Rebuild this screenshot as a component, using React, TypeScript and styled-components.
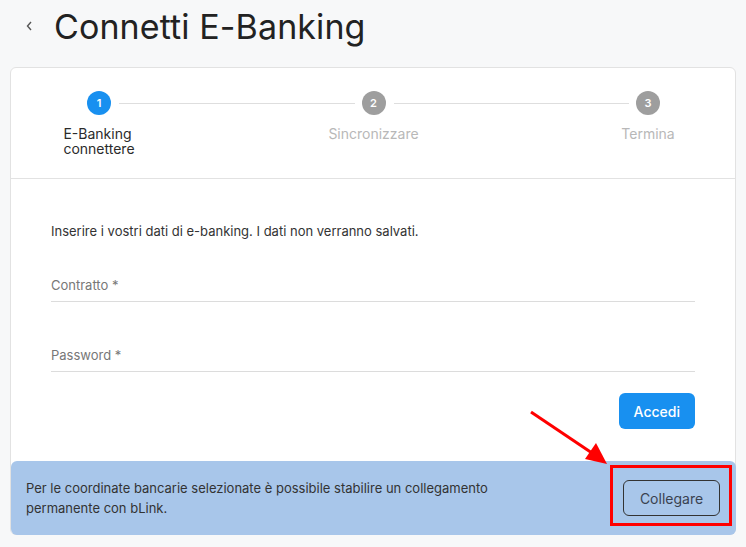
import React from "react";
import styled, { createGlobalStyle } from "styled-components";

const GlobalStyle = createGlobalStyle`
  html, body {
    margin: 0;
    padding: 0;
    background: #f7f8f9;
    font-family: Inter, "Noto Sans", sans-serif;
    color: #222;
  }
`;

const Page = styled.div`
  position: relative;
  width: 746px;
  height: 547px;
  overflow: hidden;
`;

const Header = styled.header`
  display: flex;
  align-items: center;
  height: 52px;
  padding-left: 22px;
  gap: 18px;

  h1 {
    margin: 0;
    font-size: 34px;
    font-weight: 400;
    color: #222;
    letter-spacing: 0.1px;
  }
`;

const Back = styled.button`
  display: flex;
  align-items: center;
  justify-content: center;
  width: 14px;
  height: 20px;
  padding: 0;
  border: none;
  background: none;
  color: #555;
`;

const Card = styled.section`
  margin: 15px 10px 0;
  background: #fff;
  border: 1px solid #e2e2e2;
  border-radius: 6px;
`;

const Steps = styled.div`
  display: flex;
  align-items: flex-start;
  height: 111px;
  padding: 23px 75px 0 76px;
  box-sizing: border-box;
  border-bottom: 1px solid #e2e2e2;
`;

const Step = styled.div`
  display: flex;
  flex-direction: column;
  align-items: center;
  width: 24px;
`;

const Dot = styled.div<{ $active?: boolean }>`
  display: flex;
  align-items: center;
  justify-content: center;
  width: 24px;
  height: 24px;
  border-radius: 50%;
  background: ${({ $active }) => ($active ? "#1890f0" : "#9e9e9e")};
  color: #fff;
  font-size: 11px;
  font-weight: 600;
`;

const StepLabel = styled.div<{ $active?: boolean }>`
  margin-top: 11px;
  white-space: nowrap;
  font-size: 14px;
  line-height: 15px;
  color: ${({ $active }) => ($active ? "#2b2b2b" : "#b8b8b8")};
`;

const Connector = styled.div`
  flex: 1;
  height: 1px;
  margin: 12px 7px 0 8px;
  background: #dedede;
`;

const Form = styled.div`
  padding: 42px 40px 32px;
`;

const Intro = styled.p`
  margin: 0 0 24px;
  font-size: 13px;
  line-height: 20px;
  color: #333;
`;

const Field = styled.label`
  display: block;
  padding: 10px 0 6px;
  border-bottom: 1px solid #dcdcdc;
  margin-bottom: 33px;
  font-size: 13px;
  line-height: 20px;
  color: #777;

  &:last-of-type {
    margin-bottom: 21px;
  }
`;

const Actions = styled.div`
  display: flex;
  justify-content: flex-end;
`;

const Primary = styled.button`
  height: 36px;
  padding: 0 15px;
  border: none;
  border-radius: 6px;
  background: #1890f0;
  color: #fff;
  font-family: inherit;
  font-size: 14px;
  font-weight: 500;
`;

const Banner = styled.div`
  display: flex;
  align-items: center;
  justify-content: space-between;
  gap: 20px;
  height: 74px;
  padding: 0 16px 0 15px;
  box-sizing: border-box;
  margin: 0 -1px -1px 0;
  background: #a8c6ea;
  border-radius: 6px;

  p {
    margin: 0;
    max-width: 520px;
    font-size: 13px;
    line-height: 20px;
    color: #333;
  }
`;

const Outline = styled.button`
  flex-shrink: 0;
  height: 36px;
  width: 97px;
  border: 1px solid #333;
  border-radius: 6px;
  background: transparent;
  color: #3a4250;
  font-family: inherit;
  font-size: 14px;
`;

const Annotation = styled.svg`
  position: absolute;
  left: 0;
  top: 0;
  pointer-events: none;
`;

const steps = ["E-Banking\nconnettere", "Sincronizzare", "Termina"];

export default function App() {
  return (
    <Page>
      <GlobalStyle />
      <Header>
        <Back aria-label="Indietro">
          <svg width="8" height="12" viewBox="0 0 8 12">
            <path d="M6 2 L2.5 6 L6 10" fill="none" stroke="currentColor" strokeWidth="1.4" />
          </svg>
        </Back>
        <h1>Connetti E-Banking</h1>
      </Header>
      <Card>
        <Steps>
          {steps.map((label, i) => (
            <React.Fragment key={label}>
              {i > 0 && <Connector />}
              <Step>
                <Dot $active={i === 0}>{i + 1}</Dot>
                <StepLabel $active={i === 0}>
                  {label.split("\n").map((line) => (
                    <div key={line}>{line}</div>
                  ))}
                </StepLabel>
              </Step>
            </React.Fragment>
          ))}
        </Steps>
        <Form>
          <Intro>Inserire i vostri dati di e-banking. I dati non verranno salvati.</Intro>
          <Field>Contratto *</Field>
          <Field>Password *</Field>
          <Actions>
            <Primary>Accedi</Primary>
          </Actions>
        </Form>
        <Banner>
          <p>
            Per le coordinate bancarie selezionate è possibile stabilire un collegamento
            permanente con bLink.
          </p>
          <Outline>Collegare</Outline>
        </Banner>
      </Card>
      <Annotation width="746" height="547">
        <line x1="531" y1="412" x2="592" y2="453" stroke="#ff0000" strokeWidth="3" />
        <polygon points="607,464 585,459 596,443" fill="#ff0000" />
        <rect x="611.5" y="466.5" width="119" height="58" fill="none" stroke="#ff0000" strokeWidth="3" />
      </Annotation>
    </Page>
  );
}
